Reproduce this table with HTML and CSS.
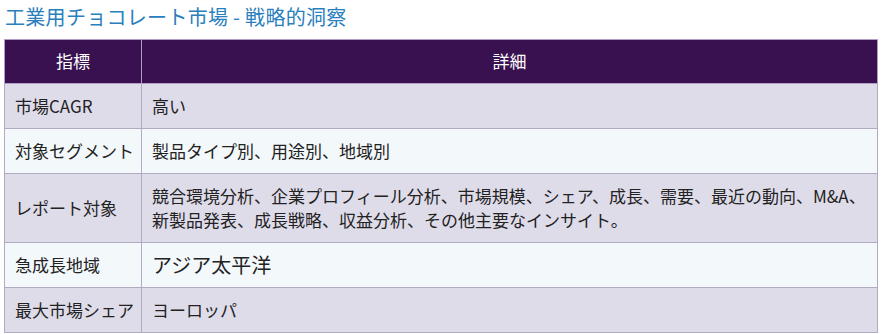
FILE: index.html
```html
<!DOCTYPE html>
<html lang="ja">
<head>
<meta charset="utf-8">
<title>工業用チョコレート市場 - 戦略的洞察</title>
<link rel="stylesheet" href="styles.css">
</head>
<body>
<div class="page">
  <h2 class="title">工業用チョコレート市場 - 戦略的洞察</h2>
  <table class="insights">
    <colgroup><col class="col-key"><col></colgroup>
    <thead>
      <tr><th>指標</th><th>詳細</th></tr>
    </thead>
    <tbody>
      <tr class="odd"><td>市場CAGR</td><td>高い</td></tr>
      <tr class="even"><td>対象セグメント</td><td>製品タイプ別、用途別、地域別</td></tr>
      <tr class="odd"><td>レポート対象</td><td>競合環境分析、企業プロフィール分析、市場規模、シェア、成長、需要、最近の動向、M&amp;A、新製品発表、成長戦略、収益分析、その他主要なインサイト。</td></tr>
      <tr class="even"><td>急成長地域</td><td class="big">アジア太平洋</td></tr>
      <tr class="odd"><td>最大市場シェア</td><td>ヨーロッパ</td></tr>
    </tbody>
  </table>
</div>
</body>
</html>
```
FILE: styles.css
```css
html, body {
  margin: 0;
  padding: 0;
  background: #ffffff;
}
body {
  font-family: "Noto Sans CJK JP", "Noto Sans", sans-serif;
  color: #222222;
}
.page {
  padding: 2px 8px 0 4px;
}
.title {
  margin: 0 0 7px 1px;
  font-size: 20px;
  font-weight: normal;
  line-height: 30px;
  color: #2a80bd;
  letter-spacing: 0.3px;
}
.insights {
  width: 100%;
  table-layout: fixed;
  border-collapse: collapse;
  font-size: 17px;
  line-height: 24px;
}
.insights col.col-key {
  width: 137px;
}
.insights th {
  background: #3a1150;
  color: #ffffff;
  font-weight: normal;
  padding: 9px 8px 10px;
  border: 1px solid #b49cc8;
  text-align: center;
}
.insights td {
  padding: 10px 8px 10px 10px;
  border: 1px solid #b1aac4;
  vertical-align: middle;
  text-align: left;
}
.insights td:first-child {
  white-space: nowrap;
  overflow: visible;
}
.insights tr.odd td {
  background: #dfdcea;
}
.insights tr.even td {
  background: #f3f8fb;
}
.insights td.big {
  font-size: 20px;
}
```
